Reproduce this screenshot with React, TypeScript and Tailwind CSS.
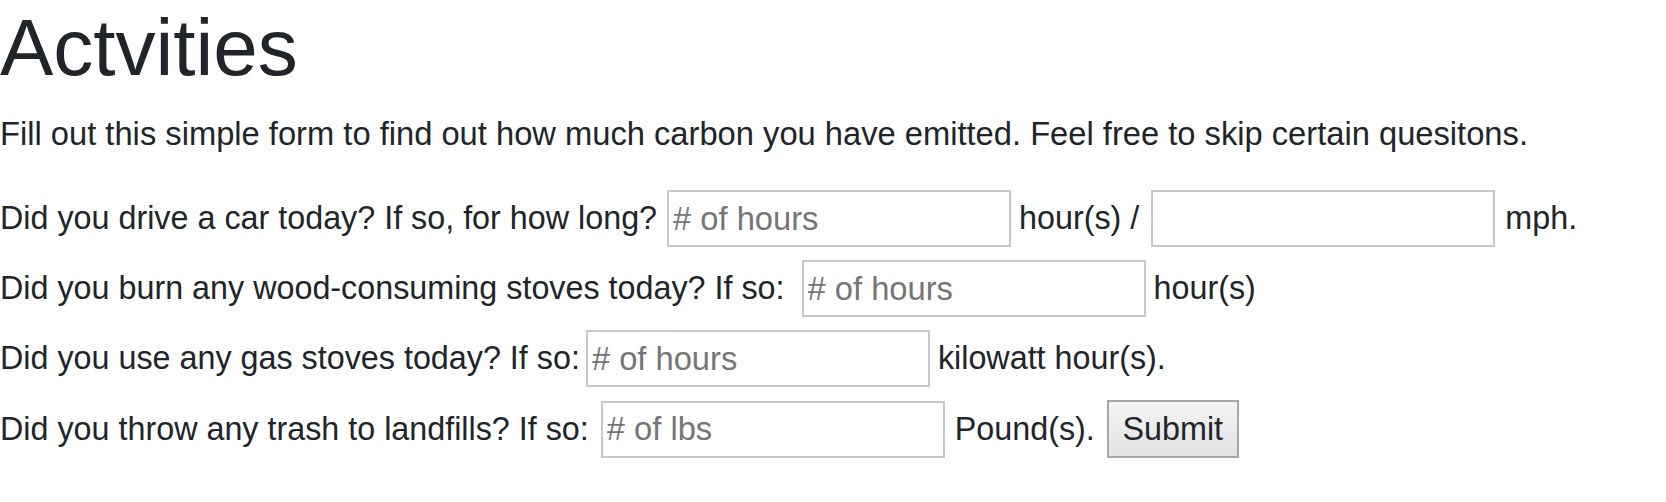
import React from 'react';

const font = { fontFamily: '"Liberation Sans", Arial, sans-serif' };

function Field({ placeholder }: { placeholder?: string }) {
  return (
    <input
      type="text"
      placeholder={placeholder}
      className="h-[57px] w-[344px] shrink-0 border-2 border-[#c9c9c9] bg-white px-[4px] text-[32.7px] text-[#212529] outline-none placeholder:text-[#757575]"
    />
  );
}

export default function App() {
  return (
    <div className="min-h-[502px] bg-white text-[#212529]" style={font}>
      <h1 className="m-0 text-[80px] leading-[96px] font-normal">Actvities</h1>
      <p className="mt-[14px] text-[32.7px] leading-[48px] whitespace-nowrap">
        Fill out this simple form to find out how much carbon you have emitted. Feel free to skip certain quesitons.
      </p>

      <form className="mt-[32px] flex flex-col gap-[13px] text-[32.3px] whitespace-nowrap" onSubmit={e => e.preventDefault()}>
        <div className="flex items-center">
          <span className="mr-[10px]">Did you drive a car today? If so, for how long?</span>
          <Field placeholder="# of hours" />
          <span className="ml-[8px] mr-[12px]">hour(s) /</span>
          <Field />
          <span className="ml-[10px]">mph.</span>
        </div>
        <div className="flex items-center">
          <span className="mr-[17px]">Did you burn any wood-consuming stoves today? If so:</span>
          <Field placeholder="# of hours" />
          <span className="ml-[8px]">hour(s)</span>
        </div>
        <div className="flex items-center">
          <span className="mr-[6px]">Did you use any gas stoves today? If so:</span>
          <Field placeholder="# of hours" />
          <span className="ml-[8px]">kilowatt hour(s).</span>
        </div>
        <div className="flex items-center">
          <span className="mr-[12px]">Did you throw any trash to landfills? If so:</span>
          <Field placeholder="# of lbs" />
          <span className="ml-[10px]">Pound(s).</span>
          <button
            type="submit"
            className="ml-[12px] h-[58px] w-[132px] border-2 border-[#a6a6a6] bg-gradient-to-b from-[#f4f4f4] to-[#e2e2e2] text-[32.3px] text-[#212529]"
          >
            Submit
          </button>
        </div>
      </form>
    </div>
  );
}
